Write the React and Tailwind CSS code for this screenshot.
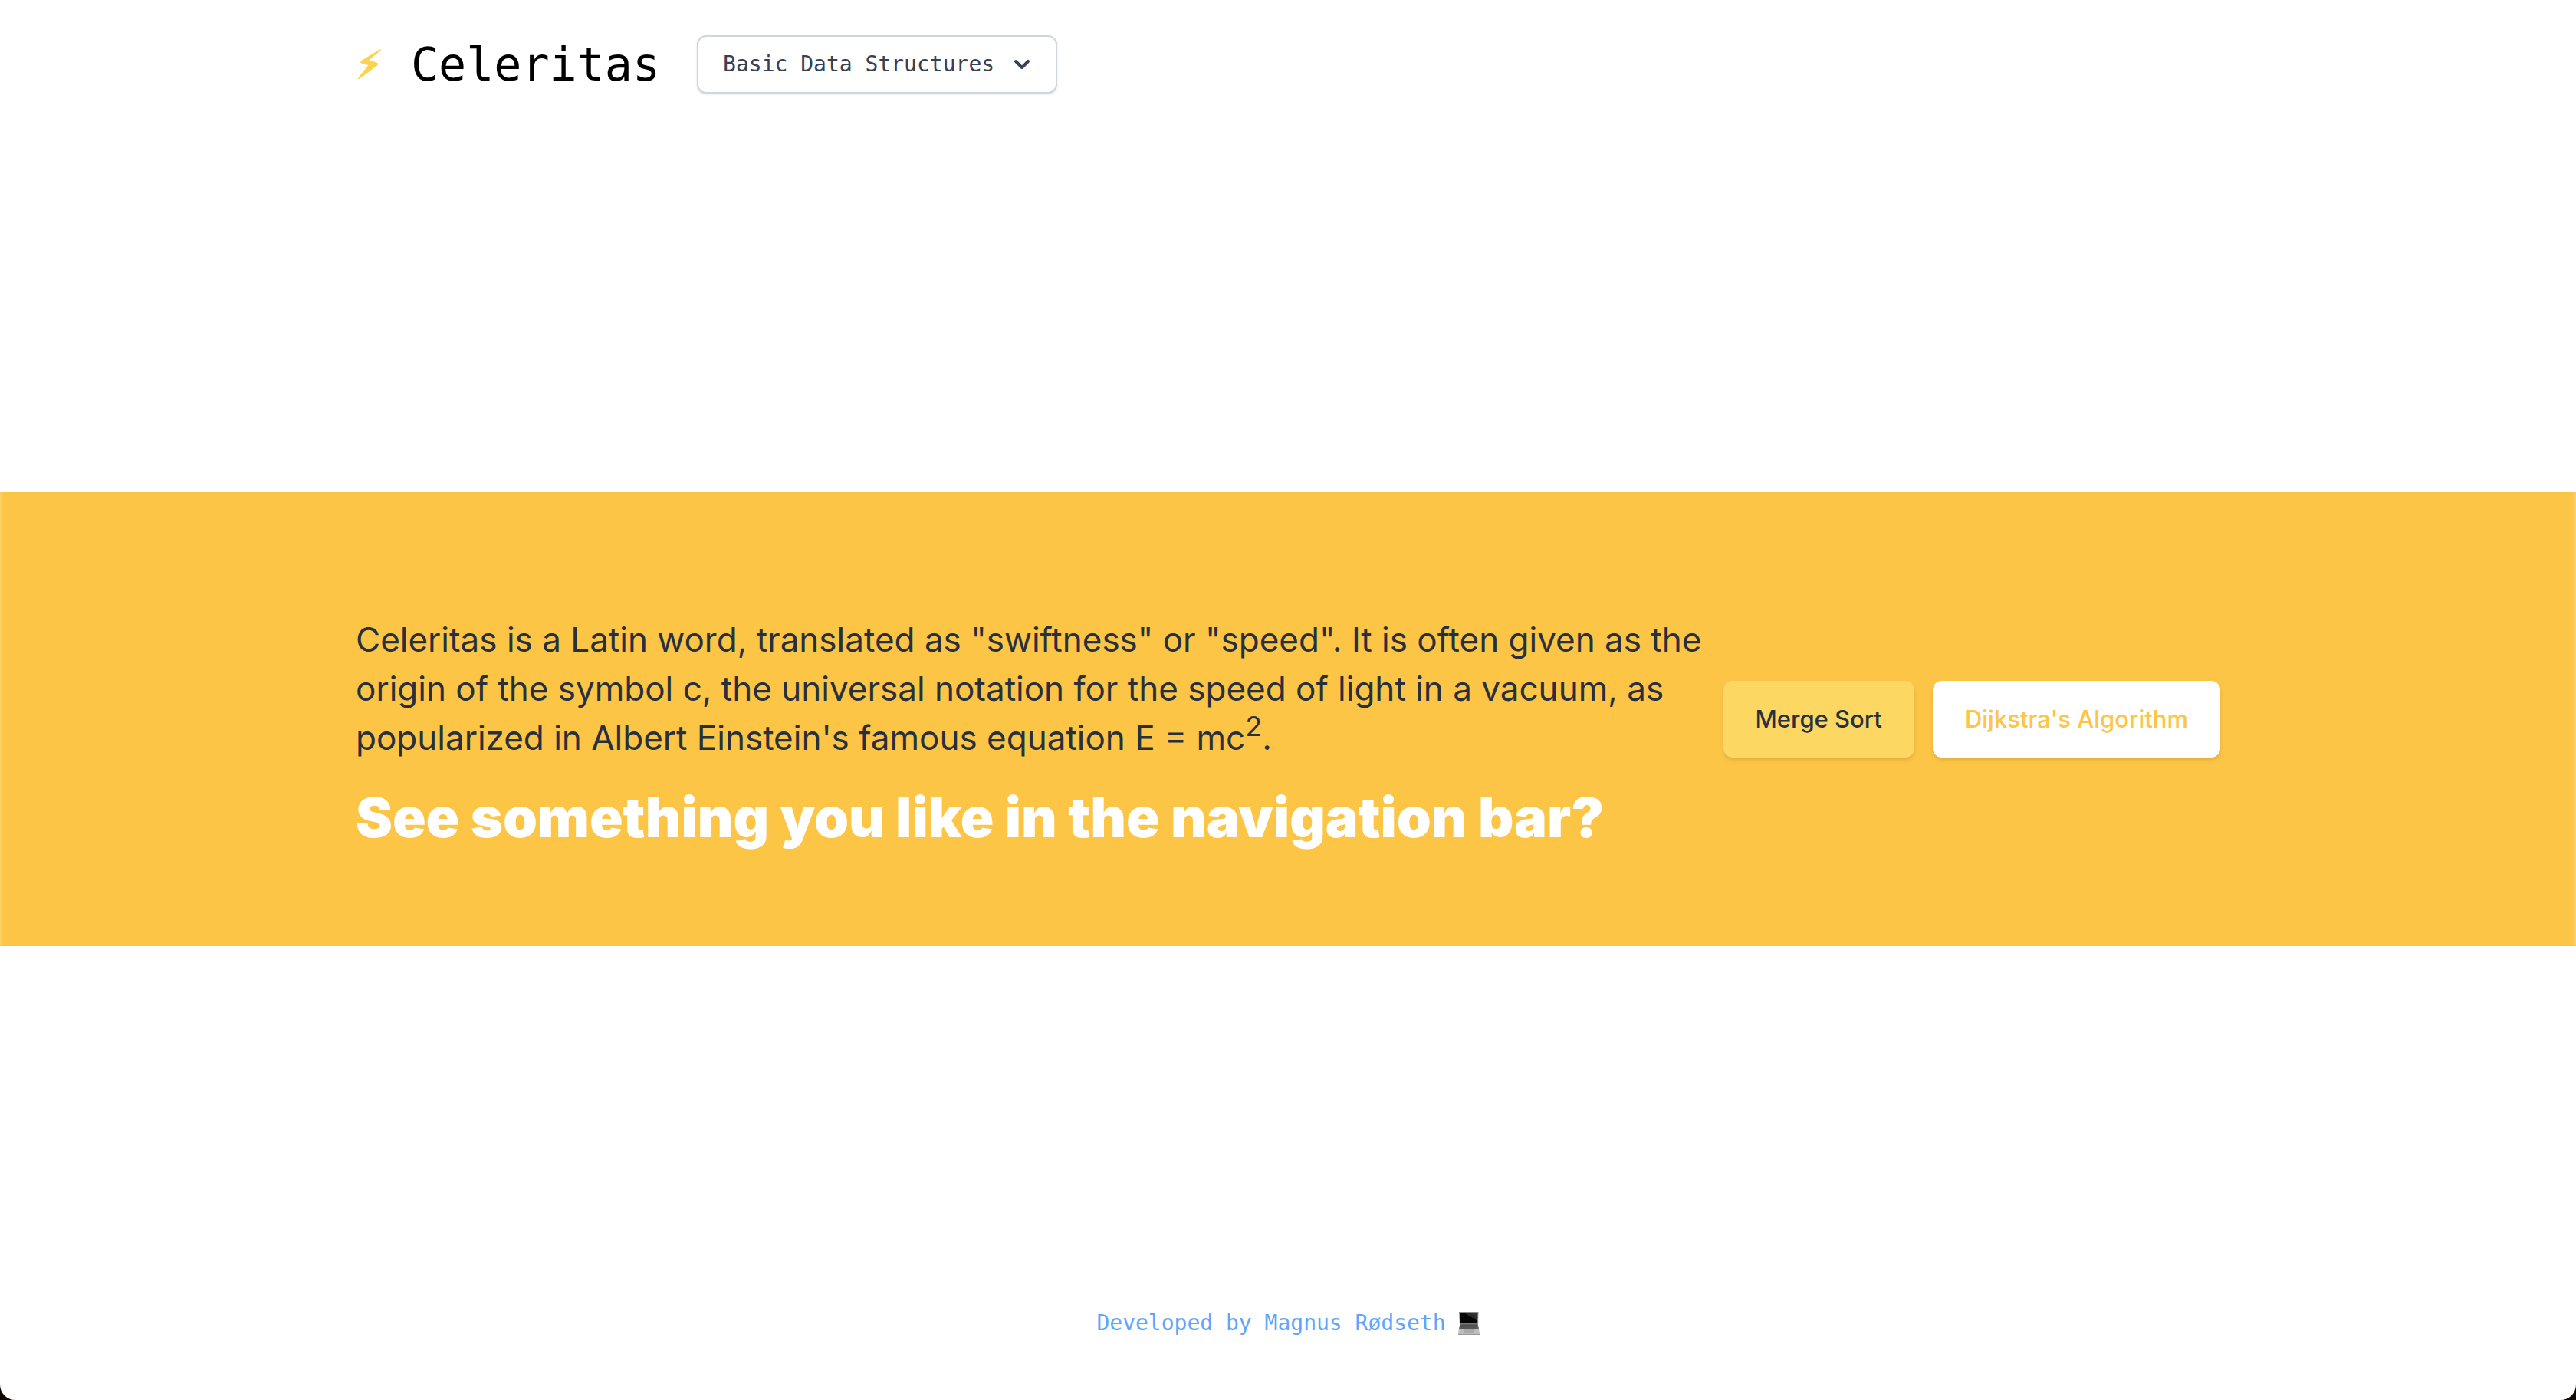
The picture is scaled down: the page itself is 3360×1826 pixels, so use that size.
import React from "react";

function Bolt() {
  return (
    <svg viewBox="-2 0 36 42" className="h-[42px] w-9 shrink-0" fill="#fcd34d" aria-hidden="true">
      <path d="M29.500 1.200 L5.800 15.800 Q3 18 5.200 19.400 L14.400 22 L1.200 38.400 Q1 40.800 3.200 39.600 L26.200 22.400 Q28 20 26 18.800 L15.200 15.600 L30.600 2.800 Q31.200 0.800 29.500 1.200 Z" />
    </svg>
  );
}

function Chevron() {
  return (
    <svg viewBox="0 0 20 20" className="-mr-2 ml-4 size-10" fill="currentColor" aria-hidden="true">
      <path
        fillRule="evenodd"
        clipRule="evenodd"
        d="M5.293 7.293a1 1 0 011.414 0L10 10.586l3.293-3.293a1 1 0 111.414 1.414l-4 4a1 1 0 01-1.414 0l-4-4a1 1 0 010-1.414z"
      />
    </svg>
  );
}

function Laptop() {
  return (
    <svg viewBox="0 0 28 30" className="h-[30px] w-7" aria-hidden="true">
      <defs>
        <linearGradient id="screen" x1="0" y1="1" x2="1" y2="0">
          <stop offset="0.6" stopColor="#050505" />
          <stop offset="0.62" stopColor="#262626" />
          <stop offset="1" stopColor="#3a3a3a" />
        </linearGradient>
      </defs>
      <path d="M1 0h25.500l-.5 16H2z" fill="#8b8b8b" />
      <path d="M2 1h23.500l-.5 14H3z" fill="url(#screen)" />
      <path d="M2.500 15.500h23L27 22H1z" fill="#6b6b6b" />
      <path d="M3.500 17.200h21M3 19.200h22M2.500 21h23" stroke="#474747" strokeWidth="1" />
      <path d="M1 22h26l1 6.500H0z" fill="#bdbdbd" />
      <path d="M8 22.500h12l.5 5h-13z" fill="#a9a9a9" />
      <path d="M0 28.500h28V30H0z" fill="#9a9a9a" />
    </svg>
  );
}

export default function App() {
  return (
    <div className="bg-[#120603] font-['Inter',sans-serif]">
      <div className="flex min-h-screen flex-col justify-between rounded-b-[20px] bg-white">
        <header className="mx-auto flex w-full max-w-[2560px] items-center px-16 pt-[46px] pb-12 font-['DejaVu_Sans_Mono',monospace]">
          <a href="#" className="flex items-center text-[60px] leading-[72px] text-black">
            <Bolt />
            <span className="ml-9">Celeritas</span>
          </a>
          <button
            type="button"
            className="ml-12 flex items-center rounded-xl border-2 border-gray-300 bg-white px-8 py-4 text-[28px] leading-10 text-[#374151] shadow-sm"
          >
            Basic Data Structures
            <Chevron />
          </button>
        </header>

        <main className="border-x-2 border-[#fdcf68] bg-[#fcc545]">
          <div className="mx-auto flex w-full max-w-[2560px] items-center justify-between px-16 py-32">
            <div className="min-w-0 flex-1">
              <p className="my-8 text-[44px] leading-[64px] text-[#28303d]">
                Celeritas is a Latin word, translated as "swiftness" or "speed". It is often given as the
                origin of the symbol c, the universal notation for the speed of light in a vacuum, as
                popularized in Albert Einstein's famous equation E = mc<sup className="text-[36px]">2</sup>.
              </p>
              <h2 className="text-[72px] leading-[80px] font-black text-white">
                See something you like in the navigation bar?
              </h2>
            </div>
            <div className="flex shrink-0 gap-6 text-[31px] leading-[48px] font-medium">
              <a href="#" className="rounded-xl border-2 border-transparent bg-[#fcd761] px-10 py-6 text-[#28303d] shadow-md">
                Merge Sort
              </a>
              <a href="#" className="rounded-xl border-2 border-white bg-white px-10 py-6 text-[#fcc545] shadow-md">
                Dijkstra's Algorithm
              </a>
            </div>
          </div>
        </main>

        <footer className="flex justify-center pb-20 font-['DejaVu_Sans_Mono',monospace] text-[28px] leading-10">
          <a href="#" className="flex items-center gap-4 text-[#60a5fa]">
            Developed by Magnus Rødseth
            <Laptop />
          </a>
        </footer>
      </div>
    </div>
  );
}
